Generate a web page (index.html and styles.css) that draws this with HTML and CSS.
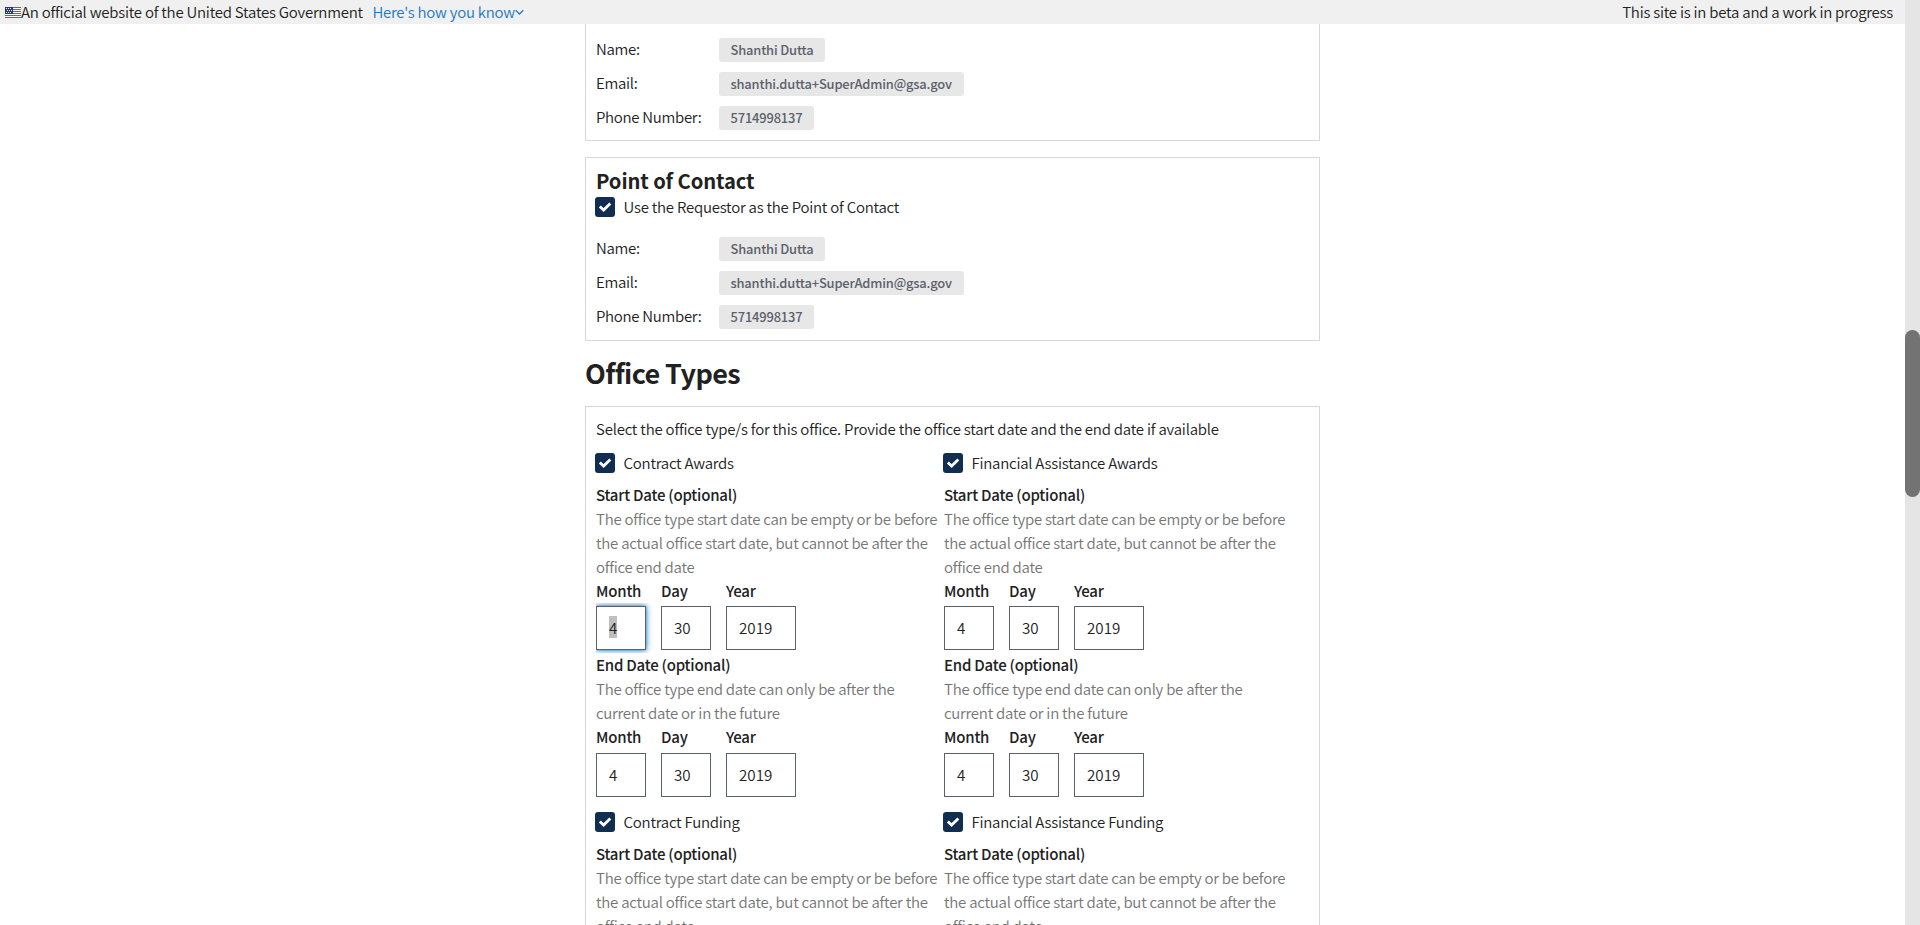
FILE: index.html
```
<!DOCTYPE html>
<html lang="en">
<head>
<meta charset="utf-8">
<title>Office Types</title>
<link rel="stylesheet" href="styles.css">
</head>
<body>
<svg class="defs" width="0" height="0" aria-hidden="true">
  <symbol id="check" viewBox="0 0 20 20"><path d="M4.8 9.5 8.6 13 15.3 6.4" fill="none" stroke="#fff" stroke-width="2.8"/></symbol>
</svg>
<div class="page">
  <header class="banner">
    <svg class="flag" width="16" height="11" viewBox="0 0 16 11" shape-rendering="crispEdges">
      <rect width="16" height="11" fill="#fff"/>
      <path d="M0 .5h16M0 2.5h16M0 4.5h16M0 6.5h16M0 8.5h16M0 10.5h16" stroke="#db3e1f" stroke-width="1"/>
      <rect width="8" height="7" fill="#1e33b1"/>
      <path d="M1 1.5h1m1 0h1m1 0h1M2 3.5h1m1 0h1m1 0h1M1 5.5h1m1 0h1m1 0h1" stroke="#fff" stroke-width="1"/>
    </svg>
    <span class="official">An official website of the United States Government</span>
    <a class="how">Here's how you know</a>
    <svg class="chevron" width="9" height="7" viewBox="0 0 9 7"><path d="M.7 1.2 4.5 5 8.3 1.2" fill="none" stroke="#2a78bd" stroke-width="1.3"/></svg>
    <span class="beta">This site is in beta and a work in progress</span>
  </header>
  <main class="content">
    <section class="card card-requestor">
      <dl class="facts">
        <dt>Name:</dt><dd><span class="pill">Shanthi Dutta</span></dd>
        <dt>Email:</dt><dd><span class="pill">shanthi.dutta+SuperAdmin@gsa.gov</span></dd>
        <dt>Phone Number:</dt><dd><span class="pill">5714998137</span></dd>
      </dl>
    </section>
    <section class="card card-contact">
      <h3 class="subtitle">Point of Contact</h3>
      <div class="check"><svg class="box"><use href="#check"/></svg><span>Use the Requestor as the Point of Contact</span></div>
      <dl class="facts">
        <dt>Name:</dt><dd><span class="pill">Shanthi Dutta</span></dd>
        <dt>Email:</dt><dd><span class="pill">shanthi.dutta+SuperAdmin@gsa.gov</span></dd>
        <dt>Phone Number:</dt><dd><span class="pill">5714998137</span></dd>
      </dl>
    </section>
    <h2 class="title">Office Types</h2>
    <section class="card card-types">
      <p class="intro">Select the office type/s for this office. Provide the office start date and the end date if available</p>
      <div class="types">
        <div class="type">
          <div class="check"><svg class="box"><use href="#check"/></svg><span>Contract Awards</span></div>
          <div class="label">Start Date (optional)</div>
          <p class="hint">The office type start date can be empty or be before<br>the actual office start date, but cannot be after the<br>office end date</p>
          <div class="date">
            <div class="label">Month</div><div class="label">Day</div><div class="label">Year</div>
            <div class="field focus"><span class="selected">4</span></div><div class="field">30</div><div class="field">2019</div>
          </div>
          <div class="label">End Date (optional)</div>
          <p class="hint">The office type end date can only be after the<br>current date or in the future</p>
          <div class="date date-end">
            <div class="label">Month</div><div class="label">Day</div><div class="label">Year</div>
            <div class="field">4</div><div class="field">30</div><div class="field">2019</div>
          </div>
        </div>
        <div class="type">
          <div class="check"><svg class="box"><use href="#check"/></svg><span>Financial Assistance Awards</span></div>
          <div class="label">Start Date (optional)</div>
          <p class="hint">The office type start date can be empty or be before<br>the actual office start date, but cannot be after the<br>office end date</p>
          <div class="date">
            <div class="label">Month</div><div class="label">Day</div><div class="label">Year</div>
            <div class="field">4</div><div class="field">30</div><div class="field">2019</div>
          </div>
          <div class="label">End Date (optional)</div>
          <p class="hint">The office type end date can only be after the<br>current date or in the future</p>
          <div class="date date-end">
            <div class="label">Month</div><div class="label">Day</div><div class="label">Year</div>
            <div class="field">4</div><div class="field">30</div><div class="field">2019</div>
          </div>
        </div>
        <div class="type">
          <div class="check"><svg class="box"><use href="#check"/></svg><span>Contract Funding</span></div>
          <div class="label">Start Date (optional)</div>
          <p class="hint">The office type start date can be empty or be before<br>the actual office start date, but cannot be after the<br>office end date</p>
        </div>
        <div class="type">
          <div class="check"><svg class="box"><use href="#check"/></svg><span>Financial Assistance Funding</span></div>
          <div class="label">Start Date (optional)</div>
          <p class="hint">The office type start date can be empty or be before<br>the actual office start date, but cannot be after the<br>office end date</p>
        </div>
      </div>
    </section>
  </main>
</div>
<div class="scrollbar"><div class="thumb"></div></div>
</body>
</html>
```
FILE: styles.css
```
* { box-sizing: border-box; }
html { height: 100%; overflow: hidden; }
body {
  display: flex;
  height: 925px;
  margin: 0;
  overflow: hidden;
  background: #fff;
  color: #212121;
  font: 350 15px/24px "Source Sans Pro", "Noto Sans CJK SC", sans-serif;
  letter-spacing: -0.22px;
  white-space: nowrap;
}
h2, h3, p, dl, dd { margin: 0; }
.defs { position: absolute; }
.page { flex: 1; height: 925px; overflow: hidden; }

.banner { display: flex; align-items: center; height: 24px; padding: 0 12px 0 5px; background: #f0f0f0; letter-spacing: -0.24px; }
.how { margin-left: 9.5px; color: #2378c3; }
.beta { margin-left: auto; }

.content { width: 735px; margin-left: 585px; }
.card { padding: 0 10px; border: 1px solid #d6d7d9; }
.card-requestor { height: 117px; padding-top: 14px; border-top: 0; }
.card-contact { height: 184px; margin-top: 16px; padding-top: 10px; }
.card-contact .facts { margin-top: 20px; }
.card-types { height: 600px; padding-top: 10px; }

.facts { display: grid; grid-template-columns: 123px auto; row-gap: 10px; justify-content: start; }
.facts dt, .facts dd { height: 24px; }
.facts dt { line-height: 22px; letter-spacing: -0.3px; }
.pill {
  display: block;
  width: max-content;
  height: 24px;
  padding: 0 12px 0 11.5px;
  border-radius: 3px;
  background: #e7e7e7;
  color: #5b616b;
  font-size: 12.9px;
  font-weight: 500;
  letter-spacing: -0.16px;
}

.subtitle { height: 29px; font-size: 20.2px; line-height: 26px; font-weight: 700; letter-spacing: -0.1px; }
.title { height: 65px; padding-top: 12px; font-size: 27px; line-height: 40px; font-weight: 700; letter-spacing: -0.6px; }

.check { display: flex; align-items: center; gap: 8.5px; height: 20px; margin-left: -1px; }
.check span { padding-bottom: 1px; letter-spacing: -0.24px; }
.box { width: 20px; height: 20px; border-radius: 3px; background: #112e51; }

.types { display: grid; grid-template-columns: 348px auto; margin-top: 12px; }
.check + .label { margin-top: 10px; }
.label { height: 24px; font-weight: 500; letter-spacing: -0.22px; }
.hint { color: #757575; letter-spacing: -0.25px; }
.date { display: grid; grid-template-columns: 50px 50px 70px; grid-template-rows: 24px 44px; gap: 3px 15px; padding-bottom: 3px; }
.date-end { row-gap: 4px; padding-bottom: 15px; }
.field { height: 44px; padding-left: 12px; border: 1px solid #5b616b; font-size: 15.2px; line-height: 40px; letter-spacing: 0; }
.focus { box-shadow: 0 0 3px #3e94cf, 0 0 7px #3e94cf; clip-path: inset(-3px -9px -3px 0); }
.selected { display: inline-block; height: 22px; line-height: 22px; background: #bfbfbf; }

.scrollbar { width: 15px; height: 925px; padding-top: 330px; background: #e5e5e5; }
.thumb { height: 167px; border-radius: 7.5px; background: #737373; }
```
